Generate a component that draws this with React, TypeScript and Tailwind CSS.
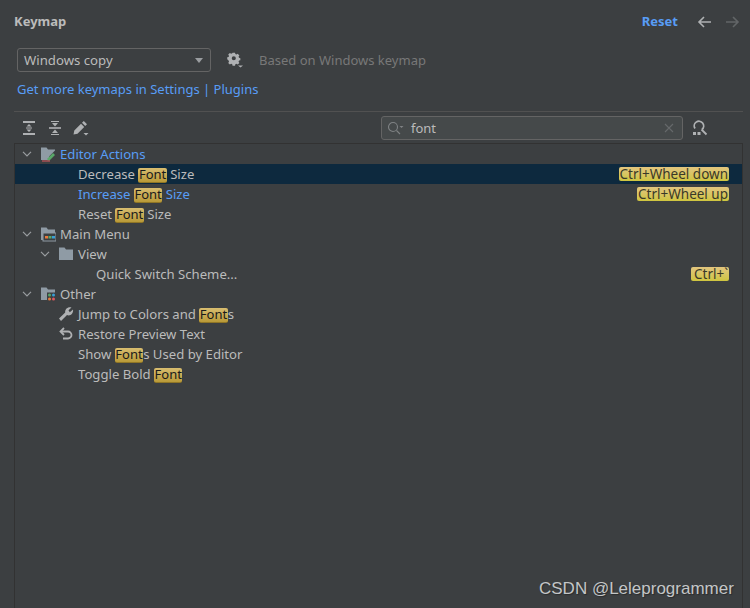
import type { ReactNode } from "react";

const FONT = "font-['Noto_Sans','Open_Sans',sans-serif]";

function Hit({ children }: { children: ReactNode }) {
  return (
    <span className="inline-block h-[15px] rounded-[2px] border-b border-[#8f7526] bg-gradient-to-b from-[#d8bd6f] to-[#b99a37] px-[.5px] text-[13px] leading-[13px] text-[#1a1a1a]">
      {children}
    </span>
  );
}

function Shortcut({ children }: { children: ReactNode }) {
  return (
    <span className="h-[14px] rounded-[2px] bg-gradient-to-b from-[#e2c57e] to-[#cfc53e] px-px text-[13.5px] leading-[14px] whitespace-nowrap text-[#3a3928]">
      {children}
    </span>
  );
}

function Chevron() {
  return (
    <svg width="10" height="6" viewBox="0 0 10 6" fill="none" stroke="#9a9da0" strokeWidth="1.2">
      <path d="M1 .8 5 4.8 9 .8" />
    </svg>
  );
}

function Folder({ children }: { children?: ReactNode }) {
  return (
    <svg width="16" height="16" viewBox="0 0 16 16">
      <path d="M1 1.500h5.500L8 3.500h7V14H1z" fill="#8f9ba5" />
      {children}
    </svg>
  );
}

function Row({
  left,
  chevron,
  icon,
  selected,
  shortcut,
  children,
  color = "text-[#bbbbbb]",
}: {
  left: string;
  chevron?: boolean;
  icon?: ReactNode;
  selected?: boolean;
  shortcut?: ReactNode;
  children: ReactNode;
  color?: string;
}) {
  return (
    <div className={`flex h-5 items-center pr-[13px] ${left} ${selected ? "bg-[#0d293e]" : ""}`}>
      <span className="flex w-[18px] shrink-0 items-center">{chevron && <Chevron />}</span>
      <span className="flex w-5 shrink-0 items-center">{icon}</span>
      <span className={`pt-px text-[13.15px] whitespace-pre ${color}`}>{children}</span>
      {shortcut && (
        <span className="ml-auto flex">
          <Shortcut>{shortcut}</Shortcut>
        </span>
      )}
    </div>
  );
}

export default function App() {
  return (
    <div className={`relative flex h-[608px] w-[750px] flex-col overflow-hidden bg-[#3c3f41] ${FONT}`}>
      <div className="flex h-[42px] items-center pt-px pr-[10px] pl-[14px]">
        <span className="text-[13px] font-bold text-[#bbbbbb]">Keymap</span>
        <span className="ml-auto text-[13px] font-bold text-[#589df6]">Reset</span>
        <svg className="ml-[19px]" width="16" height="14" viewBox="0 0 16 14" fill="none" stroke="#afb1b3" strokeWidth="1.6">
          <path d="M14 7H2M7 2 2 7l5 5" />
        </svg>
        <svg className="ml-[11px]" width="16" height="14" viewBox="0 0 16 14" fill="none" stroke="#626567" strokeWidth="1.6">
          <path d="M2 7h12M9 2l5 5-5 5" />
        </svg>
      </div>

      <div className="mt-[6px] flex items-center pl-[17px]">
        <div className="flex h-6 w-[194px] items-center justify-between rounded-[3px] border border-[#646464] pr-[7px] pl-[6px] text-[13.2px] text-[#bbbbbb]">
          <span className="pt-px">Windows copy</span>
          <span className="h-0 w-0 border-x-[4.5px] border-t-[5px] border-x-transparent border-t-[#9a9da0]" />
        </div>
        <svg className="ml-[15px]" width="18" height="18" viewBox="0 0 18 18">
          <path
            fillRule="evenodd"
            d="M7 2h3l.4 1.8 1.3.6 1.6-1 2 2-1 1.6.6 1.3 1.6.4v2.6l-1.6.4-.6 1.3 1 1.6-2 2-1.6-1-1.3.6-.4 1.7H7l-.4-1.7-1.3-.6-1.6 1-2-2 1-1.6-.6-1.3L.5 10V7.700l1.600-.4.6-1.300-1-1.600 2-2 1.600 1 1.300-.6zm1.500 4.400a2.500 2.500 0 1 0 0 5 2.500 2.500 0 0 0 0-5z"
            transform="scale(.82) translate(1 0)"
            fill="#afb1b3"
          />
          <path d="M12 14.500h5l-2.500 2z" fill="#afb1b3" />
        </svg>
        <span className="ml-[15px] pt-px text-[13px] text-[#787878]">Based on Windows keymap</span>
      </div>

      <div className="mt-[7px] h-[22px] pl-[17px] text-[13px] leading-[20px] text-[#589df6]">
        Get more keymaps in Settings | Plugins
      </div>

      <div className="mx-[14px] mt-[10px] h-px w-[729px] bg-[#515151]" />

      <div className="flex h-[31px] items-center pt-px pl-[22px]">
        <svg width="14" height="14" viewBox="0 0 14 14" fill="none" stroke="#afb1b3" strokeWidth="2">
          <path d="M1 1h12M1 13h12" />
          <path d="M4 7h6" strokeWidth="1" />
          <path d="M7 3 4.500 5.500h5zM7 11 4.500 8.500h5z" fill="#afb1b3" stroke="none" />
        </svg>
        <svg className="ml-[12px]" width="14" height="14" viewBox="0 0 14 14" fill="none" stroke="#afb1b3" strokeWidth="1">
          <path d="M3 .5h8M3 13.500h8" />
          <path d="M1 7h12" strokeWidth="1.600" />
          <path d="M7 5.500 4 2h6zM7 8.500 4 12h6z" fill="#afb1b3" stroke="none" />
        </svg>
        <svg className="ml-[11px]" width="16" height="16" viewBox="0 0 16 16">
          <path d="M.5 14.500l.8-4L8 3.800l3.200 3.200-6.700 6.700zM9 2.800l1.800-1.800 3.200 3.200L12.200 6z" fill="#afb1b3" />
          <path d="M10.500 13h5L13 15.500z" fill="#afb1b3" />
        </svg>
        <div className="ml-[292px] flex h-6 w-[302px] items-center rounded-[3px] border border-[#646464] bg-[#45494a] px-[5px]">
          <svg width="17" height="14" viewBox="0 0 17 14" fill="none" stroke="#7f8284" strokeWidth="1.100">
            <circle cx="6" cy="6" r="4.500" />
            <path d="M9.500 9.500 13 13" />
            <path d="M12.500 5h4L14.500 7z" fill="#7f8284" stroke="none" />
          </svg>
          <span className="ml-[7px] pt-px text-[13px] text-[#bbbbbb]">font</span>
          <svg className="mr-[3px] ml-auto" width="10" height="10" viewBox="0 0 10 10" fill="none" stroke="#66696b" strokeWidth="1.100">
            <path d="M1 1l8 8M9 1 1 9" />
          </svg>
        </div>
        <svg className="ml-[9px]" width="16" height="16" viewBox="0 0 16 16" fill="none" stroke="#afb1b3" strokeWidth="1.800">
          <path d="M3 8.500a4.700 4.700 0 1 1 7 1" />
          <path d="M9.500 9.500 14.500 14.500" />
          <path d="M1 12h3v3H1zM5.500 12h3v3h-3z" fill="#afb1b3" stroke="none" />
        </svg>
      </div>

      <div className="mx-[14px] h-[465px] w-[729px] border-x border-t border-[#323232]">
        <Row
          left="pl-[7px]"
          chevron
          color="text-[#589df6]"
          icon={
            <Folder>
              <path d="M15 4.500 9 10.500V14h6z" fill="#3c3f41" />
              <path d="M7.500 12.500 13 7l2 2-5.500 5.500H7.500z" fill="#59a869" />
              <path d="M2 15h8" stroke="#db5860" strokeWidth="1" />
            </Folder>
          }
        >
          Editor Actions
        </Row>
        <Row left="pl-[25px]" selected shortcut="Ctrl+Wheel down">
          Decrease <Hit>Font</Hit> Size
        </Row>
        <Row left="pl-[25px]" color="text-[#589df6]" shortcut="Ctrl+Wheel up">
          Increase <Hit>Font</Hit> Size
        </Row>
        <Row left="pl-[25px]">
          Reset <Hit>Font</Hit> Size
        </Row>
        <Row
          left="pl-[7px]"
          chevron
          icon={
            <Folder>
              <rect x="3" y="7" width="13" height="8" fill="#3c3f41" stroke="#8f9ba5" />
              <rect x="5" y="10" width="3" height="2.500" fill="#eb7a3d" />
              <rect x="8.500" y="10" width="3" height="2.500" fill="#59a869" />
              <rect x="12" y="10" width="3" height="2.500" fill="#389fd6" />
            </Folder>
          }
        >
          Main Menu
        </Row>
        <Row left="pl-[25px]" chevron icon={<Folder />}>
          View
        </Row>
        <Row left="pl-[43px]" shortcut={<span className="pl-[2px]">Ctrl+`</span>}>
          Quick Switch Scheme...
        </Row>
        <Row
          left="pl-[7px]"
          chevron
          icon={
            <Folder>
              <rect x="7" y="6.500" width="9" height="9" fill="#3c3f41" />
              <circle cx="9.500" cy="9" r="1.500" fill="#59a869" />
              <circle cx="13.500" cy="9" r="1.500" fill="#389fd6" />
              <circle cx="9.500" cy="13" r="1.500" fill="#eb7a3d" />
              <circle cx="13.500" cy="13" r="1.500" fill="#db5860" />
            </Folder>
          }
        >
          Other
        </Row>
        <Row
          left="pl-[25px]"
          icon={
            <svg width="16" height="16" viewBox="0 0 16 16">
              <path d="M1 12.500 7.200 6.500C6.800 3.500 9.500.5 13.500 1.500L10.500 4.300 11.800 6.200 15 3.500C15.800 7.500 12 10.500 9 9L3 15z" fill="#afb1b3" />
            </svg>
          }
        >
          Jump to Colors and <Hit>Font</Hit>s
        </Row>
        <Row
          left="pl-[25px]"
          icon={
            <svg width="16" height="16" viewBox="0 0 16 16" fill="none" stroke="#afb1b3" strokeWidth="1.800">
              <path d="M3 5.500h7a3.500 3.500 0 0 1 0 7H5" />
              <path d="M6 2 2.500 5.500 6 9" />
            </svg>
          }
        >
          Restore Preview Text
        </Row>
        <Row left="pl-[25px]">
          Show <Hit>Font</Hit>s Used by Editor
        </Row>
        <Row left="pl-[25px]">
          Toggle Bold <Hit>Font</Hit>
        </Row>
      </div>

      <div className="absolute top-[578px] left-[539px] font-['Liberation_Sans',sans-serif] text-[17px] leading-[22px] whitespace-nowrap text-[#c4c6c7] [text-shadow:1px_1px_1px_#2a2c2e]">
        CSDN @Leleprogrammer
      </div>
    </div>
  );
}
